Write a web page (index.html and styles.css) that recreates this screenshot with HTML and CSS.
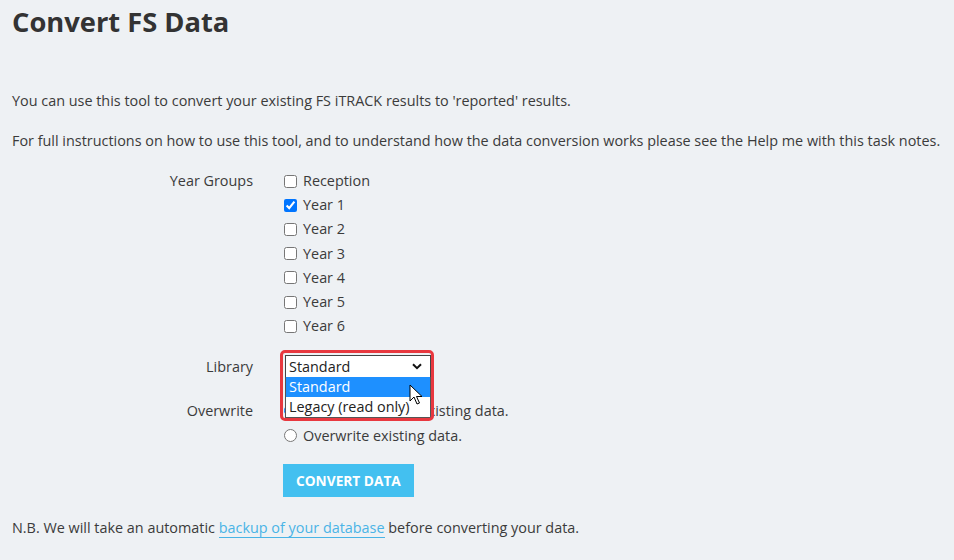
FILE: index.html
```html
<!DOCTYPE html>
<html lang="en">
<head>
    <meta charset="UTF-8" />
    <title>Convert FS Data</title>
    <link rel="stylesheet" href="styles.css">
</head>
<body>
    <div class="page">
        <h1>Convert FS Data</h1>

        <p class="intro">You can use this tool to convert your existing FS iTRACK results to 'reported' results.</p>
        <p class="intro">For full instructions on how to use this tool, and to understand how the data conversion works please see the Help me with this task notes.</p>

        <form class="convert-form">
            <div class="form-row">
                <label class="row-label">Year Groups</label>
                <div class="options">
                    <label class="option"><input type="checkbox" name="year" value="R"> Reception</label>
                    <label class="option"><input type="checkbox" name="year" value="1" checked> Year 1</label>
                    <label class="option"><input type="checkbox" name="year" value="2"> Year 2</label>
                    <label class="option"><input type="checkbox" name="year" value="3"> Year 3</label>
                    <label class="option"><input type="checkbox" name="year" value="4"> Year 4</label>
                    <label class="option"><input type="checkbox" name="year" value="5"> Year 5</label>
                    <label class="option"><input type="checkbox" name="year" value="6"> Year 6</label>
                </div>
            </div>

            <div class="form-row library-row">
                <label class="row-label">Library</label>
                <div class="select-wrap">
                    <div class="select">
                        <span>Standard</span>
                        <svg class="chevron" width="10" height="7" viewBox="0 0 10 7"><path d="M1 1.2 5 5.2 9 1.2" fill="none" stroke="#111" stroke-width="2"/></svg>
                    </div>
                    <ul class="select-menu">
                        <li class="selected">Standard</li>
                        <li>Legacy (read only)</li>
                    </ul>
                    <div class="highlight"></div>
                    <svg class="pointer" width="14" height="21" viewBox="0 0 14 21"><path d="M1 1v16l4-4 3 7 2.5-1-3-6.5h5.5z" fill="#fff" stroke="#000" stroke-width="1" stroke-linejoin="round"/></svg>
                </div>
            </div>

            <div class="form-row overwrite-row">
                <label class="row-label">Overwrite</label>
                <div class="options">
                    <label class="option radio"><input type="radio" name="overwrite" value="no" checked> Do not overwrite existing data.</label>
                    <label class="option radio"><input type="radio" name="overwrite" value="yes"> Overwrite existing data.</label>
                </div>
            </div>

            <div class="form-row">
                <span></span>
                <div><button type="button" class="btn-convert">CONVERT DATA</button></div>
            </div>
        </form>

        <p class="note">N.B. We will take an automatic <a href="#">backup of your database</a> before converting your data.</p>
    </div>
</body>
</html>
```

FILE: styles.css
```css
* {
    margin: 0;
    padding: 0;
    box-sizing: border-box;
}

body {
    background: #eef1f4;
    color: #3b3b3b;
    font-family: 'Open Sans', 'Liberation Sans', sans-serif;
    font-size: 14.4px;
    line-height: 20px;
}

.page {
    padding: 4px 12px 0;
}

h1 {
    font-size: 27.3px;
    line-height: 36px;
    font-weight: 700;
    color: #333;
}

.intro {
    margin-top: 20px;
}

.intro:first-of-type {
    margin-top: 51px;
}

/* Form */
.convert-form {
    margin-top: 18px;
}

.form-row {
    display: grid;
    grid-template-columns: 241px 1fr;
    column-gap: 30px;
}

.row-label {
    text-align: right;
    line-height: 24px;
}

.options {
    display: flex;
    flex-direction: column;
    align-items: flex-start;
}

.option {
    display: flex;
    align-items: center;
    gap: 6px;
    line-height: 24.2px;
}

.option input {
    width: 13px;
    height: 13px;
    margin: 0 0 0 1px;
}

.option.radio {
    line-height: 25px;
}

/* Library select, shown open */
.library-row {
    margin-top: 17px;
}

.library-row .row-label {
    line-height: 23px;
}

.select-wrap {
    position: relative;
    width: 146px;
    margin-left: 2px;
}

.select {
    display: flex;
    align-items: center;
    justify-content: space-between;
    height: 23px;
    padding: 0 8px 0 3px;
    background: #fff;
    border: 1px solid #444;
    color: #222;
}

.select-menu {
    position: absolute;
    top: 22px;
    left: 0;
    width: 146px;
    list-style: none;
    background: #fff;
    border: 1px solid #555;
    border-top: none;
    z-index: 2;
}

.select-menu li {
    padding: 0 3px;
    line-height: 20px;
    color: #222;
}

.select-menu li.selected {
    background: #1e90ff;
    color: #fff;
}

.highlight {
    position: absolute;
    top: -5px;
    left: -5px;
    width: 154px;
    height: 71px;
    border: 3px solid #e8383f;
    border-radius: 5px;
    z-index: 3;
}

.pointer {
    position: absolute;
    top: 29px;
    left: 124px;
    z-index: 4;
}

.overwrite-row {
    margin-top: 20px;
}

.overwrite-row .row-label {
    line-height: 25px;
}

/* Button */
.btn-convert {
    margin-top: 16px;
    height: 33px;
    padding: 0 13px;
    background: #43c0f0;
    color: #fff;
    border: none;
    font-family: 'Open Sans', 'Liberation Sans', sans-serif;
    font-size: 13.7px;
    font-weight: 700;
    cursor: pointer;
}

.note {
    margin-top: 21px;
}

.note a {
    color: #4ab4e6;
    text-decoration: none;
    border-bottom: 1px solid #4ab4e6;
}
```
